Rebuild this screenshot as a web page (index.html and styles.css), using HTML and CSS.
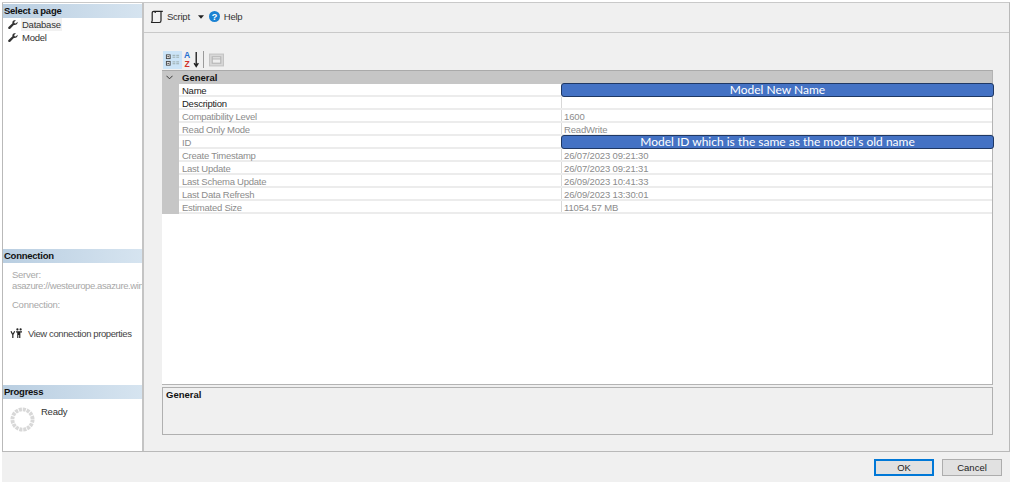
FILE: index.html
```html
<!DOCTYPE html>
<html lang="en">
<head>
<meta charset="utf-8">
<title>Model Properties</title>
<link rel="stylesheet" href="styles.css">
</head>
<body>
<div class="window">
  <div class="main">
    <aside class="side">
      <section class="pages">
        <h2 class="sec">Select a page</h2>
        <ul class="pagelist">
          <li class="page selected"><svg class="wrench" viewBox="0 0 12 12"><path d="M11.5 2.2 9.3 4.3 7.8 3.9 7.4 2.4 9.6.4C8 -.2 6.2.4 5.5 1.9c-.3.7-.3 1.4-.1 2.1L.6 8.3c-.6.6-.6 1.6 0 2.1.6.6 1.5.6 2.1 0L7 5.9c1.8.5 3.6-.3 4.3-1.9.2-.6.3-1.2.2-1.8z" /></svg><span class="pagename">Database</span></li>
          <li class="page"><svg class="wrench" viewBox="0 0 12 12"><path d="M11.5 2.2 9.3 4.3 7.8 3.9 7.4 2.4 9.6.4C8 -.2 6.2.4 5.5 1.9c-.3.7-.3 1.4-.1 2.1L.6 8.3c-.6.6-.6 1.6 0 2.1.6.6 1.5.6 2.1 0L7 5.9c1.8.5 3.6-.3 4.3-1.9.2-.6.3-1.2.2-1.8z" /></svg><span class="pagename">Model</span></li>
        </ul>
      </section>
      <section class="connection">
        <h2 class="sec">Connection</h2>
        <div class="conn-body">
          <div class="muted">Server:</div>
          <div class="muted nowrap server">asazure://westeurope.asazure.win</div>
          <div class="muted conn-label">Connection:</div>
          <div class="conn-link">
            <svg class="plug" viewBox="0 0 14 12"><path d="M1 3.5 2.5 6.5h1L5 3.5M3 6.5V11" fill="none" stroke="#222" stroke-width="1.3"/><circle cx="8" cy="1.5" r="1.2" fill="#222"/><circle cx="11.5" cy="1.5" r="1.2" fill="#222"/><path d="M6.5 3.5h6.5v1.3h-1.8V11h-1.3V7.5H9V11H7.8V4.8H6.5z" fill="#222"/></svg>
            <span>View connection properties</span>
          </div>
        </div>
      </section>
      <section class="progress">
        <h2 class="sec">Progress</h2>
        <div class="prog-body">
          <svg class="spinner" viewBox="0 0 26 26"><circle cx="13" cy="13" r="10.5" fill="none" stroke="#d8d8d8" stroke-width="4" stroke-dasharray="3.2 .92"/></svg>
          <span class="ready">Ready</span>
        </div>
      </section>
    </aside>
    <div class="content">
      <div class="toolbar">
        <span class="tool"><svg class="script-ico" viewBox="0 0 14 14"><path d="M1 12.5h8.5M1 12.5c.8-.3 1.2-1 1.2-2V3c0-1 .6-1.7 1.6-1.7h9M3.8 1.3c1 0 1.6.7 1.6 1.7M11 1.5V10.5c0 1-.6 2-1.5 2" fill="none" stroke="#222" stroke-width="1.2"/></svg>Script</span>
        <svg class="caret" viewBox="0 0 7 4"><path d="M0 0h7L3.5 4z" fill="#222"/></svg>
        <span class="tool help"><svg class="help-ico" viewBox="0 0 12 12"><circle cx="6" cy="6" r="6" fill="#1b82d2"/><text class="help-q" x="6" y="9.4" text-anchor="middle">?</text></svg>Help</span>
      </div>
      <div class="body">
        <div class="gridbar">
          <span class="gbtn active"><svg viewBox="0 0 16 14"><rect x="1.5" y="1.5" width="4" height="4" fill="#fff" stroke="#444"/><rect x="1.5" y="8.5" width="4" height="4" fill="#fff" stroke="#444"/><path d="M2.5 3.5h2M2.5 10.5h2" stroke="#222"/><path d="M8 2h3M12 2h3M8 4h3M12 4h3M8 9h3M12 9h3M8 11h3M12 11h3" stroke="#9aa" stroke-width="1"/></svg></span>
          <span class="gbtn"><svg class="az-ico" viewBox="0 0 16 16"><text class="az a" x="0" y="7">A</text><text class="az z" x=".5" y="15">Z</text><path d="M11.5 1v13M9.5 11.5l2 3 2-3" fill="none" stroke="#222" stroke-width="1.3"/></svg></span>
          <span class="gsep"></span>
          <span class="gbtn"><svg viewBox="0 0 14 12"><rect x=".5" y=".5" width="13" height="11" fill="#d8d8d8" stroke="#c4c4c4"/><rect x="3" y="3" width="8" height="6" fill="#eee" stroke="#b4b4b4"/><path d="M3 5h8" stroke="#b4b4b4"/></svg></span>
        </div>
        <div class="grid">
          <div class="grid-head"><svg class="chev" viewBox="0 0 8 5"><path d="M.5.5 4 4 7.5.5" fill="none" stroke="#333" stroke-width="1.1"/></svg>General</div>
          <div class="grid-rows">
            <div class="row"><span class="k edit">Name</span><span class="v"><span class="callout">Model New Name</span></span></div>
            <div class="row"><span class="k edit">Description</span><span class="v"></span></div>
            <div class="row"><span class="k">Compatibility Level</span><span class="v">1600</span></div>
            <div class="row"><span class="k">Read Only Mode</span><span class="v">ReadWrite</span></div>
            <div class="row"><span class="k">ID</span><span class="v"><span class="callout">Model ID which is the same as the model’s old name</span></span></div>
            <div class="row"><span class="k">Create Timestamp</span><span class="v">26/07/2023 09:21:30</span></div>
            <div class="row"><span class="k">Last Update</span><span class="v">26/07/2023 09:21:31</span></div>
            <div class="row"><span class="k">Last Schema Update</span><span class="v">26/09/2023 10:41:33</span></div>
            <div class="row"><span class="k">Last Data Refresh</span><span class="v">26/09/2023 13:30:01</span></div>
            <div class="row"><span class="k">Estimated Size</span><span class="v">11054.57 MB</span></div>
          </div>
        </div>
        <div class="descbox"><strong class="desc-title">General</strong></div>
      </div>
    </div>
  </div>
  <div class="footer">
    <button class="btn default" type="button">OK</button>
    <button class="btn" type="button">Cancel</button>
  </div>
</div>
</body>
</html>
```
FILE: styles.css
```css
* { box-sizing: border-box; }
html, body { margin: 0; padding: 0; background: #fff; }
body {
  width: 1017px;
  height: 486px;
  overflow: hidden;
  padding: 2px 0 0 2px;
  font-family: "Liberation Sans", Arial, sans-serif;
  font-size: 9.5px;
  letter-spacing: -.25px;
  color: #222;
}
.window {
  width: 1008px;
  height: 480px;
  display: flex;
  flex-direction: column;
  background: #f0f0f0;
}
.main {
  height: 450px;
  display: flex;
  border-bottom: 1px solid #b9b9b9;
  border-right: 1px solid #b9b9b9;
  border-top: 1px solid #c9c9c9;
}
.side {
  width: 142px;
  flex: none;
  background: #fff;
  border-left: 1px solid #b9b9b9;
  border-right: 2px solid #c4c4c4;
  display: flex;
  flex-direction: column;
  padding-top: 1px;
}
.sec {
  margin: 0;
  height: 14px;
  line-height: 13px;
  padding-left: 1px;
  font-size: 9.5px;
  font-weight: bold;
  color: #111;
  background: linear-gradient(90deg, #b9cee1, #d6e4f0);
}
.pages { height: 245px; }
.pagelist { list-style: none; margin: 0; padding: 0 0 0 5px; }
.page {
  height: 13px;
  display: flex;
  align-items: center;
  gap: 3px;
}
.pagename { padding: 0 1px; line-height: 13px; color: #333; }
.selected .pagename { background: #f1f1f1; }
.wrench { width: 10px; height: 10px; fill: #333; flex: none; }
.connection { height: 136px; overflow: hidden; }
.conn-body { padding: 6px 0 0 9px; }
.muted { color: #a8a8a8; line-height: 11px; }
.nowrap { white-space: nowrap; }
.server { letter-spacing: -.4px; }
.conn-label { margin-top: 8px; }
.conn-link {
  display: flex;
  align-items: center;
  gap: 5px;
  margin: 18px 0 0 -2px;
  color: #444;
  letter-spacing: -.4px;
  white-space: nowrap;
}
.plug { width: 13px; height: 11px; flex: none; }
.prog-body { display: flex; padding: 7px 0 0 7px; }
.spinner { width: 25px; height: 25px; margin-top: 1px; }
.ready { margin-left: 6px; color: #333; line-height: 11px; }
.content { flex: 1; min-width: 0; display: flex; flex-direction: column; }
.toolbar {
  height: 30px;
  flex: none;
  display: flex;
  align-items: center;
  padding: 0 0 2px 6px;
  border-bottom: 1px solid #c9c9c9;
  color: #333;
}
.tool { display: flex; align-items: center; gap: 3px; }
.help { gap: 4px; }
.script-ico { width: 14px; height: 14px; }
.caret { width: 6px; height: 4px; margin: 0 5px 0 8px; }
.help-ico { width: 11px; height: 11px; }
.help-q { font-size: 10px; font-weight: bold; fill: #fff; }
.body { flex: 1; display: flex; flex-direction: column; padding: 17px 16px 16px 18px; }
.gridbar { height: 20px; flex: none; display: flex; align-items: center; gap: 1px; padding: 0 0 1px 1px; }
.gbtn { width: 19px; height: 18px; display: flex; align-items: center; justify-content: center; }
.gbtn svg { width: 15px; height: 14px; }
.gbtn svg.az-ico { width: 17px; height: 17px; }
.gbtn.active { background: #cce4f7; }
.gsep { width: 1px; height: 17px; background: #9a9a9a; margin: 0 2px 0 0; }
.az { font-size: 8px; font-weight: bold; }
.a { fill: #1f6fd0; }
.z { fill: #d0302a; }
.grid {
  height: 315px;
  flex: none;
  background: #fff;
  border: 1px solid #b4b4b4;
  border-left: 0;
  border-top: 1px solid #aaa;
}
.grid-head {
  height: 13px;
  line-height: 13px;
  background: #c6c6c6;
  font-weight: bold;
  color: #111;
  display: flex;
  align-items: center;
  letter-spacing: 0;
}
.chev { width: 7px; height: 5px; margin: 0 9px 0 4px; }
.grid-rows { border-left: 17px solid #c6c6c6; }
.row { height: 13px; display: flex; border-bottom: 2px solid #ececec; }
.k {
  width: 383px;
  flex: none;
  padding: 1px 0 0 3px;
  line-height: 11px;
  color: #8c8c8c;
  border-right: 1px solid #d8d8d8;
}
.k.edit { color: #222; }
.v {
  position: relative;
  flex: 1;
  padding: 1px 0 0 2px;
  line-height: 11px;
  letter-spacing: -.15px;
  color: #8c8c8c;
}
.callout {
  position: absolute;
  left: -1px;
  top: -1px;
  width: 433px;
  height: 14px;
  background: #4472c4;
  border: 1px solid #1f3864;
  border-radius: 3px;
  color: #fff;
  font-family: Lato, "Open Sans", sans-serif;
  font-size: 12px;
  letter-spacing: 0;
  line-height: 12px;
  text-align: center;
  white-space: nowrap;
}
.descbox {
  height: 48px;
  flex: none;
  margin-top: 2px;
  padding: 1px 3px;
  border: 1px solid #b0b0b0;
}
.desc-title { color: #111; line-height: 11px; letter-spacing: 0; }
.footer {
  flex: 1;
  display: flex;
  justify-content: flex-end;
  align-items: flex-start;
  gap: 8px;
  padding: 7px 8px 0 0;
}
.btn {
  width: 60px;
  height: 17px;
  padding: 0;
  background: #e1e1e1;
  border: 1px solid #adadad;
  font: inherit;
  color: #222;
  line-height: 14px;
}
.btn.default { border: 2px solid #0078d7; }
```
